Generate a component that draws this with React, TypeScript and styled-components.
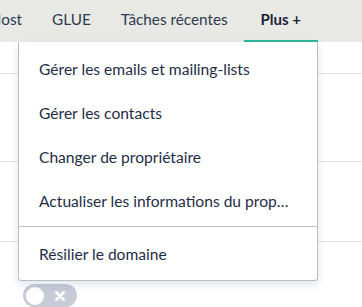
import React from "react";
import styled, { createGlobalStyle } from "styled-components";

const Global = createGlobalStyle`
  html, body { margin: 0; padding: 0; background: #ffffff; }
  body { font-family: "Source Sans Pro", Lato, "Noto Sans", sans-serif; color: #1f2d44; }
  * { box-sizing: border-box; }
`;

const Page = styled.div`
  position: relative;
  width: 362px;
  height: 307px;
  overflow: hidden;
  background: #fff;
`;

const TabBar = styled.div`
  height: 42px;
  background: #e8e9e5;
  overflow: hidden;
`;

const TabList = styled.div`
  display: flex;
  justify-content: flex-end;
  height: 42px;
  padding-right: 44px;
  gap: 2px;
`;

const Tab = styled.div<{ $active?: boolean }>`
  flex-shrink: 0;
  display: flex;
  align-items: center;
  height: 42px;
  padding: 0 ${(p) => (p.$active ? 17 : 14)}px 2px;
  font-size: ${(p) => (p.$active ? 15 : 15.3)}px;
  white-space: nowrap;
  font-weight: ${(p) => (p.$active ? 700 : 400)};
  color: ${(p) => (p.$active ? "#1b2338" : "#2c3a50")};
  border-bottom: 2px solid ${(p) => (p.$active ? "#2eb79b" : "transparent")};
`;

const Row = styled.div<{ $h: number }>`
  height: ${(p) => p.$h}px;
  border-bottom: 1px solid #e3e3e6;
`;

const ToggleRow = styled.div`
  padding: 42px 0 0 23px;
`;

const Toggle = styled.div`
  display: flex;
  align-items: center;
  justify-content: space-between;
  width: 54px;
  height: 23px;
  border-radius: 12px;
  background: #c8ccd7;
  padding: 0 12px 0 3px;
`;

const Knob = styled.div`
  width: 18px;
  height: 18px;
  border-radius: 50%;
  background: #fff;
`;

const Menu = styled.div`
  position: absolute;
  top: 42px;
  left: 18px;
  width: 300px;
  background: #fff;
  border: 1px solid #bdbec1;
  border-top: none;
  border-radius: 0 0 3px 3px;
  box-shadow: 0 4px 10px rgba(40, 70, 130, 0.14);
  padding-top: 5px;
  padding-bottom: 4px;
`;

const Item = styled.div`
  height: 44px;
  display: flex;
  align-items: center;
  padding: 0 24px 0 20px;
  font-size: 15.6px;
  color: #1f2d47;
  white-space: nowrap;
  overflow: hidden;
  & > span {
    overflow: hidden;
    text-overflow: ellipsis;
  }
`;

const Divider = styled.div`
  height: 1px;
  background: #bdbec1;
  margin: 3px 0 5px;
`;

const Cross = () => (
  <svg width="10" height="10" viewBox="0 0 10 10">
    <path d="M1.5 1.5 L8.5 8.5 M8.5 1.5 L1.5 8.5" stroke="#fff" strokeWidth="2.8" strokeLinecap="round" />
  </svg>
);

export default function App() {
  return (
    <Page>
      <Global />
      <TabBar>
        <TabList>
          <Tab>DynHost</Tab>
          <Tab>GLUE</Tab>
          <Tab>Tâches récentes</Tab>
          <Tab $active>Plus +</Tab>
        </TabList>
      </TabBar>
      <Row $h={32} />
      <Row $h={88} />
      <Row $h={80} />
      <ToggleRow>
        <Toggle>
          <Knob />
          <Cross />
        </Toggle>
      </ToggleRow>
      <Menu>
        <Item><span>Gérer les emails et mailing-lists</span></Item>
        <Item><span>Gérer les contacts</span></Item>
        <Item><span>Changer de propriétaire</span></Item>
        <Item><span>Actualiser les informations du propriétaire</span></Item>
        <Divider />
        <Item><span>Résilier le domaine</span></Item>
      </Menu>
    </Page>
  );
}
